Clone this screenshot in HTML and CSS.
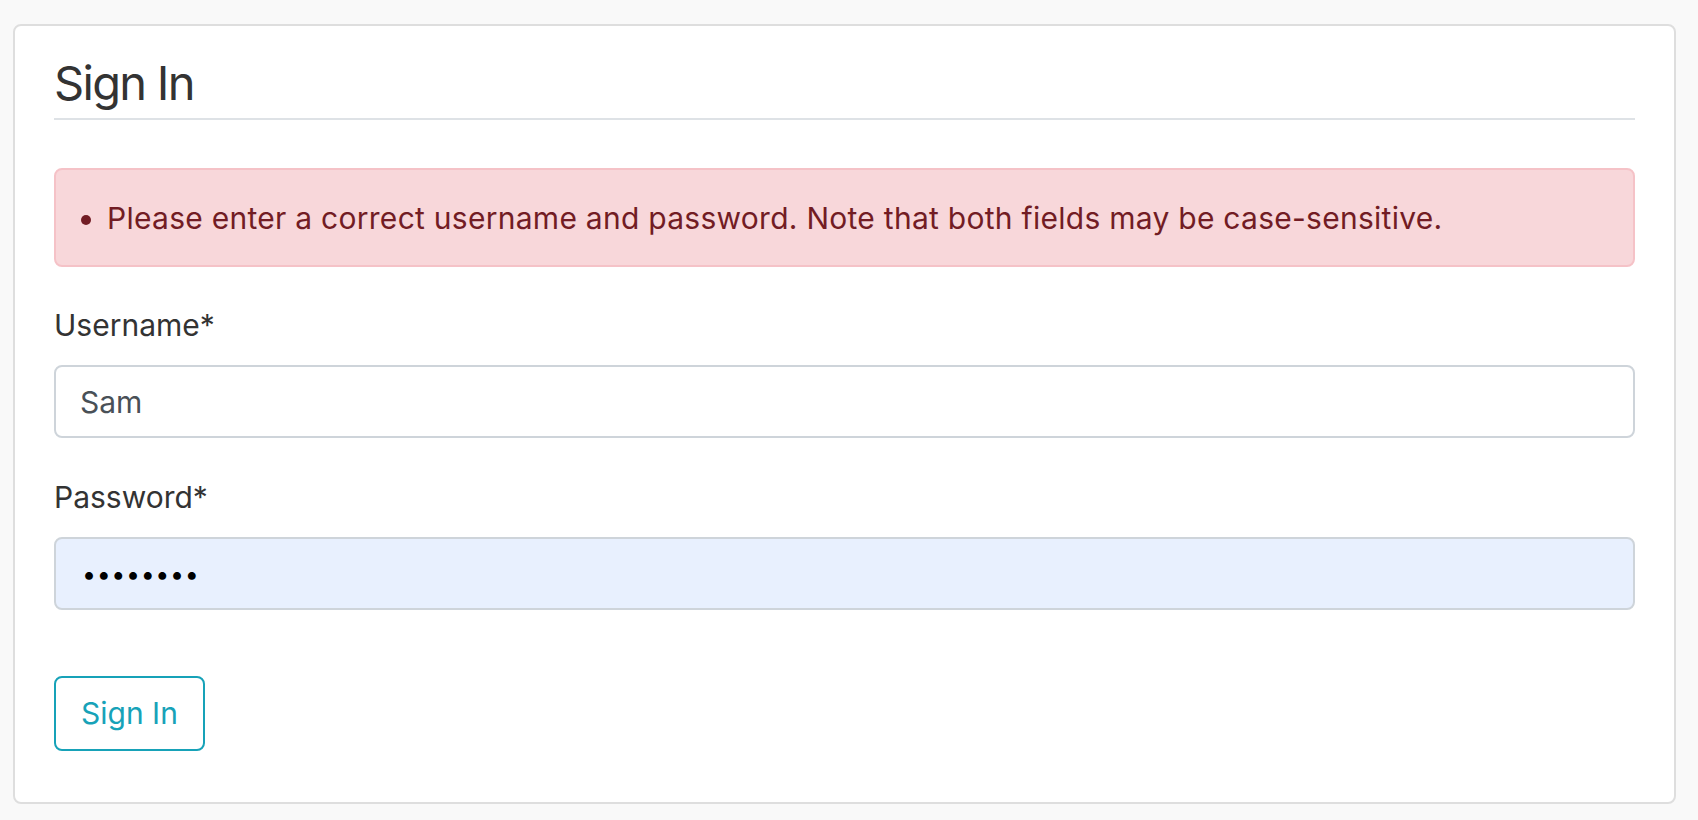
FILE: index.html
```html
<!DOCTYPE html>
<html lang="en">
<head>
<meta charset="utf-8">
<title>Sign In</title>
<link rel="stylesheet" href="styles.css">
</head>
<body>
<main class="card">
  <h2 class="title">Sign In</h2>
  <div class="alert">
    <ul class="errors">
      <li>Please enter a correct username and password. Note that both fields may be case-sensitive.</li>
    </ul>
  </div>
  <form class="form">
    <div class="field">
      <label class="label" for="u">Username*</label>
      <input class="input" id="u" type="text" value="Sam">
    </div>
    <div class="field">
      <label class="label" for="p">Password*</label>
      <input class="input input-auto" id="p" type="password" value="password">
    </div>
    <button class="btn" type="button">Sign In</button>
  </form>
</main>
</body>
</html>
```
FILE: styles.css
```css
* { box-sizing: border-box; }
html, body { margin: 0; height: 100%; }
body {
  background: #f9f9f9;
  padding: 24px 22px 0 13px;
  font-family: Inter, "Noto Sans", sans-serif;
  font-size: 30px;
  line-height: 45px;
  color: #333333;
}
.card {
  background: #ffffff;
  border: 2px solid #dedede;
  border-radius: 8px;
  padding: 29px 39px 51px 39px;
}
.title {
  margin: 0 0 48px 0;
  font-size: 47px;
  line-height: 56px;
  font-weight: 400;
  letter-spacing: -1.7px;
  color: #333333;
  padding-bottom: 7px;
  border-bottom: 2px solid #dee2e6;
}
.alert {
  background: #f8d7da;
  border: 2px solid #f5c2c7;
  border-radius: 8px;
  color: #721c24;
  padding: 26px 24px 24px 24px;
  margin-bottom: 36px;
}
.errors {
  margin: 0;
  padding-left: 27px;
  letter-spacing: 0.27px;
}
.form { display: flex; flex-direction: column; align-items: flex-start; }
.field { display: flex; flex-direction: column; width: 100%; margin-bottom: 37px; }
.field:last-of-type { margin-bottom: 66px; }
.label { margin-bottom: 17px; }
.input {
  font: inherit;
  line-height: 45px;
  height: 73px;
  padding: 12px 24px;
  border: 2px solid #ced4da;
  border-radius: 8px;
  color: #495057;
  background: #ffffff;
  outline: none;
  width: 100%;
}
.input-auto {
  background: #e8f0fe;
  color: #000000;
  font-size: 25px;
  letter-spacing: 0.6px;
  padding-left: 26px;
}
.btn {
  font: inherit;
  line-height: 45px;
  padding: 13px 25px;
  border: 2px solid #17a2b8;
  border-radius: 8px;
  background: transparent;
  color: #17a2b8;
  cursor: pointer;
}
```
